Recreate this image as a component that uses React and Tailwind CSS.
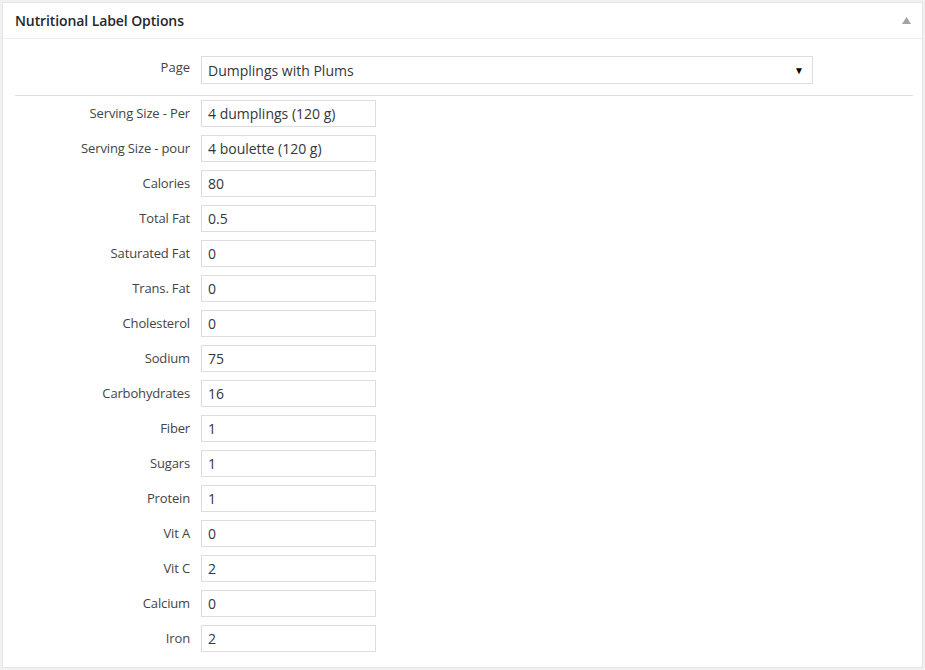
import React from 'react';

const fields = [
  ['Serving Size - Per', '4 dumplings (120 g)'],
  ['Serving Size - pour', '4 boulette (120 g)'],
  ['Calories', '80'],
  ['Total Fat', '0.5'],
  ['Saturated Fat', '0'],
  ['Trans. Fat', '0'],
  ['Cholesterol', '0'],
  ['Sodium', '75'],
  ['Carbohydrates', '16'],
  ['Fiber', '1'],
  ['Sugars', '1'],
  ['Protein', '1'],
  ['Vit A', '0'],
  ['Vit C', '2'],
  ['Calcium', '0'],
  ['Iron', '2'],
];

export default function App() {
  return (
    <div
      className="w-[925px] h-[670px] bg-[#f1f1f1] pt-[2px] pl-[2px]"
      style={{ fontFamily: '"Open Sans", "Noto Sans", sans-serif' }}
    >
      <div className="w-[921px] h-[666px] border border-[#e5e5e5] bg-white">
        <div className="h-[36px] flex items-center justify-between pl-[12px] pr-[10px] border-b border-[#eeeeee]">
          <h2 className="text-[14px] font-semibold text-[#23282d] tracking-[-0.1px]">Nutritional Label Options</h2>
          <svg width="9" height="7" viewBox="0 0 9 7" className="mr-[1px]">
            <path d="M4.5 0 L9 7 L0 7 Z" fill="#a0a5aa" />
          </svg>
        </div>

        <div className="pl-[12px] pr-[9px]">
          <div className="flex items-center pt-[17px] pb-[11px] border-b border-[#dddddd]">
            <label className="w-[175px] text-right text-[13px] text-[#444] -mt-[4px]">Page</label>
            <div className="ml-[11px] w-[612px] h-[28px] border border-[#dddddd] flex items-center justify-between pl-[6px] pr-[8px]">
              <span className="text-[14px] text-[#32373c]">Dumplings with Plums</span>
              <span className="text-[10px] text-black leading-none">▼</span>
            </div>
          </div>

          <div className="flex flex-col gap-[8px] pt-[4px]">
            {fields.map(([label, value]) => (
              <div key={label} className="flex items-center">
                <label className="w-[175px] text-right text-[13px] text-[#444] tracking-[-0.15px]">{label}</label>
                <input
                  type="text"
                  defaultValue={value}
                  className="ml-[11px] w-[175px] h-[27px] border border-[#dddddd] px-[6px] text-[14px] text-[#32373c] outline-none"
                />
              </div>
            ))}
          </div>
        </div>
      </div>
    </div>
  );
}
